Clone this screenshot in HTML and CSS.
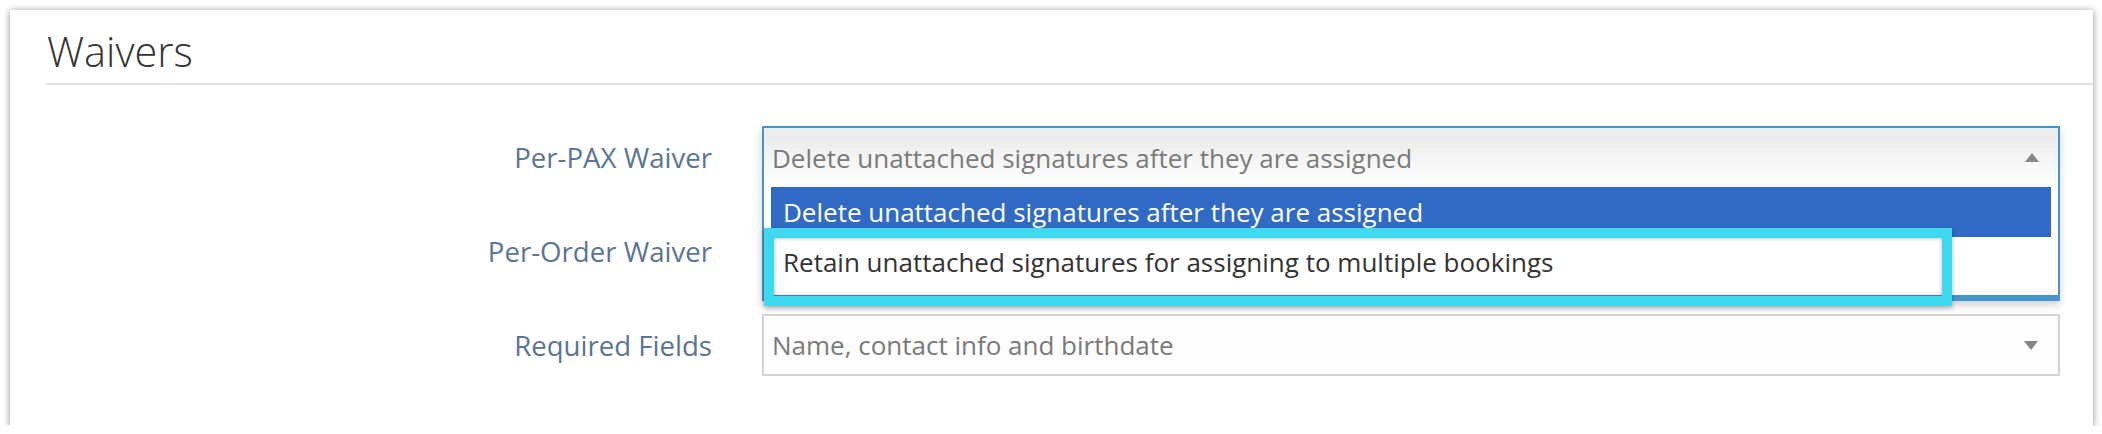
FILE: index.html
```html
<!DOCTYPE html>
<html lang="en">
<head>
<meta charset="utf-8">
<title>Waivers</title>
<link rel="stylesheet" href="styles.css">
</head>
<body>
<section class="card">
  <h2 class="card-title">Waivers</h2>
  <div class="form">
    <div class="row">
      <label class="label">Per-PAX Waiver</label>
      <div class="control">
        <div class="select">
          <span class="select-text">Delete unattached signatures after they are assigned</span>
          <span class="caret down"></span>
        </div>
        <div class="dropdown">
          <div class="dropdown-head">
            <span class="select-text">Delete unattached signatures after they are assigned</span>
            <span class="caret up"></span>
          </div>
          <ul class="options">
            <li class="option highlighted">Delete unattached signatures after they are assigned</li>
            <li class="option">Retain unattached signatures for assigning to multiple bookings</li>
          </ul>
          <div class="callout"></div>
        </div>
      </div>
    </div>
    <div class="row">
      <label class="label">Per-Order Waiver</label>
      <div class="control">
        <div class="select">
          <span class="select-text"></span>
          <span class="caret down"></span>
        </div>
      </div>
    </div>
    <div class="row">
      <label class="label">Required Fields</label>
      <div class="control">
        <div class="select">
          <span class="select-text">Name, contact info and birthdate</span>
          <span class="caret down"></span>
        </div>
      </div>
    </div>
  </div>
</section>
</body>
</html>
```

FILE: styles.css
```css
* { box-sizing: border-box; }

html, body {
  margin: 0;
  padding: 0;
  background: #ffffff;
}

body {
  font-family: "Open Sans", "Liberation Sans", sans-serif;
  padding: 10px 0 0 10px;
}

.card {
  width: 2083px;
  height: 416px;
  background: #ffffff;
  box-shadow: 0 1px 7px rgba(0, 0, 0, 0.45);
  padding: 16px 0 50px 36px;
  display: flex;
  flex-direction: column;
}

.card-title {
  margin: 0;
  font-size: 41.5px;
  font-weight: 300;
  line-height: 50px;
  color: #333333;
  padding: 0 0 7px 1px;
  border-bottom: 2px solid #e3e3e3;
}

.form {
  margin-top: 41px;
  display: flex;
  flex-direction: column;
  gap: 32px;
}

.row {
  display: grid;
  grid-template-columns: 666px 1298px;
  column-gap: 50px;
  align-items: center;
  height: 62px;
}

.label {
  text-align: right;
  font-size: 27.6px;
  color: #5b7594;
}

.control {
  position: relative;
  height: 62px;
}

.select {
  height: 62px;
  border: 2px solid #d4d4d4;
  background: #fdfdfd;
  display: flex;
  align-items: center;
  justify-content: space-between;
  padding: 0 20px 0 8px;
}

.select-text {
  font-size: 26px;
  color: #7a7a7a;
  white-space: nowrap;
}

.caret {
  width: 0;
  height: 0;
  border-left: 7px solid transparent;
  border-right: 7px solid transparent;
}

.caret.down { border-top: 9px solid #858585; }
.caret.up { border-bottom: 9px solid #858585; }

.dropdown {
  position: absolute;
  top: 0;
  left: 0;
  width: 1298px;
  height: 175px;
  z-index: 5;
  background: #ffffff;
  border: 2px solid #4595cc;
  border-bottom-width: 6px;
  box-shadow: 0 4px 8px rgba(0, 0, 0, 0.18);
  display: flex;
  flex-direction: column;
}

.dropdown-head {
  height: 59px;
  display: flex;
  align-items: center;
  justify-content: space-between;
  padding: 0 19px 0 8px;
  background: linear-gradient(#ececec 15%, #ffffff 95%);
}

.options {
  list-style: none;
  margin: 0 7px;
  padding: 0;
}

.option {
  height: 50px;
  display: flex;
  align-items: center;
  padding-left: 12px;
  font-size: 26px;
  color: #333333;
  white-space: nowrap;
}

.option.highlighted {
  background: #316ac4;
  color: #ffffff;
}

.callout {
  position: absolute;
  top: 100px;
  left: 0;
  width: 1188px;
  height: 78px;
  border: 10px solid #3ed9ee;
  box-shadow: 0 2px 5px rgba(0, 0, 0, 0.3), inset 0 0 4px rgba(0, 0, 0, 0.3);
}
```
